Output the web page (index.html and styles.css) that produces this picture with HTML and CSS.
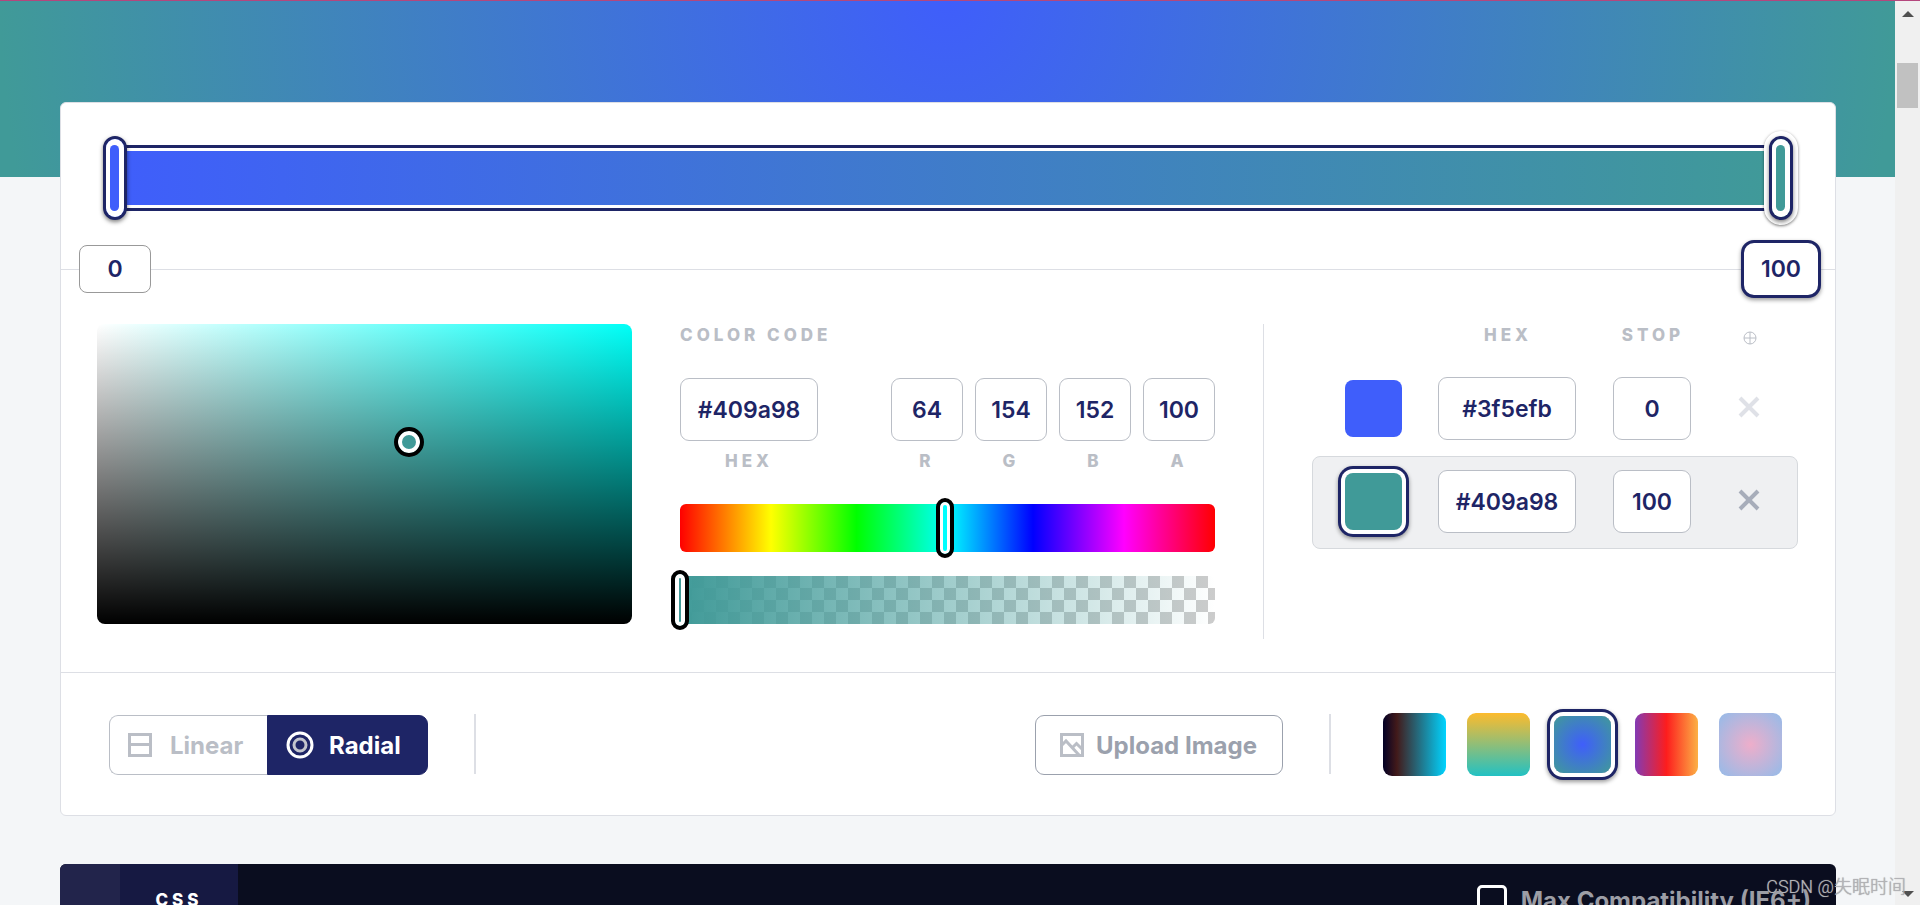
FILE: index.html
```html
<!DOCTYPE html>
<html lang="en">
<head>
<meta charset="utf-8">
<title>CSS Gradient</title>
<link rel="stylesheet" href="styles.css">
</head>
<body>
<div class="viewport">
  <main class="page">
    <section class="card">
      <div class="gradient-section">
        <div class="gradient-bar">
          <button class="handle handle-start" aria-label="Blue stop"></button>
          <button class="handle handle-end" aria-label="Teal stop"></button>
          <input class="position position-start" aria-label="First stop position" value="0">
          <input class="position position-end" aria-label="Last stop position" value="100">
        </div>
      </div>

      <div class="editor">
        <div class="picker"><button class="picker-dot" aria-label="Selected color"></button></div>

        <div class="codes">
          <h2 class="label heading">Color Code</h2>
          <div class="fields">
            <div class="field field-hex"><input id="hex" class="box" value="#409a98"><label class="label" for="hex">Hex</label></div>
            <div class="field"><input id="r" class="box" value="64"><label class="label" for="r">R</label></div>
            <div class="field"><input id="g" class="box" value="154"><label class="label" for="g">G</label></div>
            <div class="field"><input id="b" class="box" value="152"><label class="label" for="b">B</label></div>
            <div class="field"><input id="a" class="box" value="100"><label class="label" for="a">A</label></div>
          </div>
          <div class="track hue"><input type="range" aria-label="Hue" min="0" max="1000" value="495"></div>
          <div class="track alpha"><input type="range" aria-label="Opacity" min="0" max="100" value="0"></div>
        </div>

        <div class="stops">
          <div class="stop-row stop-head">
            <span></span>
            <span class="label" id="stop-hex">Hex</span>
            <span class="label" id="stop-pos">Stop</span>
            <svg class="plus" viewBox="0 0 14 14" aria-hidden="true"><circle cx="7" cy="7" r="6"/><path d="M7 1v12M1 7h12"/></svg>
          </div>
          <div class="stop-row">
            <button class="swatch blue" aria-label="Pick blue stop"></button>
            <input class="box" aria-labelledby="stop-hex" value="#3f5efb">
            <input class="box box-stop" aria-labelledby="stop-pos" value="0">
            <button class="remove faint" aria-label="Remove stop"><svg viewBox="0 0 24 24"><path d="M3 3l18 18M21 3L3 21"/></svg></button>
          </div>
          <div class="stop-row selected">
            <button class="swatch teal active" aria-label="Pick teal stop"></button>
            <input class="box" aria-labelledby="stop-hex" value="#409a98">
            <input class="box box-stop" aria-labelledby="stop-pos" value="100">
            <button class="remove" aria-label="Remove stop"><svg viewBox="0 0 24 24"><path d="M3 3l18 18M21 3L3 21"/></svg></button>
          </div>
        </div>
      </div>

      <div class="toolbar">
        <div class="modes">
          <button class="mode linear">
            <svg class="icon" width="24" height="24" viewBox="0 0 24 24"><path d="M1.5 1.5h21v21h-21zM1.5 11.500h21"/></svg>Linear
          </button>
          <button class="mode radial">
            <svg class="icon" width="28" height="28" viewBox="0 0 28 28"><circle cx="14" cy="14" r="12"/><circle class="ring" cx="14" cy="14" r="6"/></svg>Radial
          </button>
        </div>
        <span class="rule"></span>
        <button class="upload">
          <svg class="icon" width="24" height="24" viewBox="0 0 24 24"><path d="M1.5 1.5h21v21h-21z"/><path d="M2 12l4-4 13 14M12 15l4.500-4.500 6 6"/></svg>Upload Image
        </button>
        <span class="rule"></span>
        <div class="presets">
          <button class="preset night" aria-label="Night gradient"></button>
          <button class="preset sand" aria-label="Sand gradient"></button>
          <button class="preset ocean active" aria-label="Ocean gradient"></button>
          <button class="preset sunset" aria-label="Sunset gradient"></button>
          <button class="preset candy" aria-label="Candy gradient"></button>
        </div>
      </div>
    </section>

    <section class="code-panel">
      <span class="gutter"></span>
      <button class="tab">CSS</button>
      <label class="compat"><input type="checkbox">Max Compatibility (IE6+)</label>
    </section>
  </main>
  <div class="scrollbar" aria-hidden="true">
    <svg width="12" height="6" viewBox="0 0 12 6"><path d="M0 6l6-6 6 6z"/></svg>
    <span class="thumb"></span>
    <svg class="down" width="12" height="6" viewBox="0 0 12 6"><path d="M0 0h12L6 6z"/></svg>
  </div>
  <div class="watermark">CSDN @失眠时间</div>
</div>
</body>
</html>
```
FILE: styles.css
```css
* { box-sizing: border-box; }

:root {
  --navy: #1e2566;
  --blue: #3f5efb;
  --teal: #409a98;
  --line: #dddfe5;
  --muted: #babec6;
}

body {
  margin: 0;
  font-family: Inter, "Liberation Sans", sans-serif;
  color: var(--navy);
}

button, input { font: inherit; color: inherit; margin: 0; }
button { border: 0; padding: 0; background: none; cursor: pointer; }
svg { display: block; }

.viewport {
  position: relative;
  display: flex;
  height: 100vh;
  overflow: hidden;
  border-top: 1px solid #b4477d;
}

.page {
  flex: 1;
  padding: 101px 59px 0 60px;
  background: linear-gradient(#f4f6f8, #f4f6f8) 0 176px no-repeat, radial-gradient(circle farthest-side at 50% 0, var(--blue), var(--teal));
}

.card {
  background: #fff;
  border: 1px solid var(--line);
  border-radius: 6px;
}

/* Gradient slider */
.gradient-section {
  padding: 42px 54px 58px;
  border-bottom: 1px solid var(--line);
}

.gradient-bar {
  position: relative;
  height: 66px;
  border: solid var(--navy);
  border-width: 3px 0;
  padding: 3px 0;
  background: linear-gradient(90deg, var(--blue), var(--teal)) content-box;
}

.handle {
  position: absolute;
  top: -12px;
  width: 24px;
  height: 84px;
  border: 3px solid var(--navy);
  border-radius: 12px;
  transform: translateX(-50%);
}

.handle::before {
  content: "";
  position: absolute;
  inset: 0;
  border-radius: 9px;
  background: #fff;
}

.handle::after {
  content: "";
  position: absolute;
  inset: 6px 5px 6px 4px;
  border-radius: 5px;
  background: inherit;
}

.handle-start { left: 0; background: var(--blue); box-shadow: 0 2px 4px rgba(0, 0, 0, .5); }
.handle-end { left: 100%; background: var(--teal); box-shadow: 0 2px 4px rgba(0, 0, 0, .5), 0 0 0 5px #fff, 0 1px 3px 5px rgba(0, 0, 0, .5); }

.position {
  position: absolute;
  top: 97px;
  width: 72px;
  height: 48px;
  border: 1px solid #999;
  border-radius: 8px;
  background: #fff;
  font-size: 23px;
  font-weight: 600;
  text-align: center;
  transform: translateX(-50%);
}

.position-start { left: 0; }

.position-end {
  left: 100%;
  top: 92px;
  width: 80px;
  height: 58px;
  border: 3px solid var(--navy);
  border-radius: 13px;
  box-shadow: 0 2px 4px rgba(0, 0, 0, .4);
}

/* Editor */
.editor {
  display: grid;
  grid-template-columns: repeat(3, 1fr);
  gap: 48px;
  padding: 54px 37px 33px 36px;
  border-bottom: 1px solid var(--line);
}

.picker {
  position: relative;
  height: 300px;
  border-radius: 8px;
  background: linear-gradient(transparent, #000), linear-gradient(90deg, #fff, #00fff7);
}

.picker-dot {
  position: absolute;
  left: 58.3%;
  top: 39.3%;
  width: 30px;
  height: 30px;
  border: 4px solid #000;
  border-radius: 50%;
  background: var(--teal);
  box-shadow: inset 0 0 0 4px #fff;
  transform: translate(-50%, -50%);
}

.label {
  font-size: 17px;
  font-weight: 800;
  line-height: 22px;
  letter-spacing: 4px;
  text-transform: uppercase;
  color: var(--muted);
}

.heading { margin: 0; }

.fields {
  display: flex;
  gap: 12px;
  margin-top: 32px;
}

.field {
  display: flex;
  flex-direction: column;
  align-items: center;
  gap: 9px;
  width: 72px;
}

.field-hex { width: 138px; margin-right: auto; }

.box {
  width: 100%;
  height: 63px;
  padding: 0;
  border: 1px solid var(--muted);
  border-radius: 9px;
  background: #fff;
  font-size: 23px;
  font-weight: 600;
  text-align: center;
}

.track {
  height: 48px;
  border-radius: 6px;
}

.hue {
  margin-top: 32px;
  background: linear-gradient(90deg, #f00 0%, #ff0 17%, #0f0 33%, #0ff 50%, #00f 66%, #f0f 83%, #f00 100%);
}

.alpha {
  margin-top: 24px;
  background: linear-gradient(90deg, var(--teal), transparent), conic-gradient(#fff 25%, #ccc 0 50%, #fff 0 75%, #ccc 0) 12px 0 / 24px 24px;
}

.track input {
  appearance: none;
  display: block;
  width: calc(100% + 18px);
  height: 60px;
  margin: 0 -9px;
  background: none;
  position: relative;
  top: -6px;
}

.track input::-webkit-slider-thumb {
  appearance: none;
  width: 18px;
  height: 60px;
  border: 4px solid #000;
  border-radius: 9px;
  background: #0ff;
  box-shadow: inset 0 0 0 3px #fff;
}

.alpha input::-webkit-slider-thumb {
  background: var(--teal);
  box-shadow: inset 0 0 0 4px #fff;
}

/* Stop list */
.stops {
  border-left: 1px solid var(--line);
  padding-left: 48px;
  min-height: 315px;
}

.stop-row {
  display: grid;
  grid-template-columns: 1fr 138px 152px 42px;
  align-items: center;
  justify-items: center;
  height: 93px;
  padding: 0 27px 2px 0;
  border: 1px solid transparent;
  border-radius: 8px;
}

.stop-head { height: 22px; margin-bottom: 17px; padding-bottom: 0; border: 0; }
.stop-row.selected { border-color: #d6d9dd; background: #eff0f2; }
.box-stop { width: 78px; }

.plus { width: 14px; height: 14px; margin-top: 6px; fill: none; stroke: var(--muted); }

.swatch {
  width: 57px;
  height: 57px;
  margin-right: 4px;
  border-radius: 8px;
}

.blue { background: var(--blue); }
.teal { background: var(--teal); }

.active {
  box-shadow: 0 0 0 4px #fff, 0 0 0 7px var(--navy), 0 2px 4px 7px rgba(0, 0, 0, .4);
}

.remove { padding-bottom: 4px; }
.remove svg { width: 24px; height: 24px; fill: none; stroke: #a7adba; stroke-width: 4; }
.remove.faint svg { stroke: #dfe1e7; }

/* Toolbar */
.toolbar {
  display: flex;
  align-items: center;
  height: 142px;
  padding: 0 53px 0 48px;
  font-size: 24px;
  font-weight: 700;
}

.toolbar .rule {
  width: 2px;
  height: 60px;
  background: var(--line);
}

.icon { flex: none; fill: none; stroke: var(--muted); stroke-width: 3; }
.modes { display: flex; margin-right: 46px; }

.mode, .upload {
  display: flex;
  align-items: center;
  height: 60px;
  margin-top: 2px;
  border: 1px solid var(--muted);
}

.mode { gap: 18px; padding-left: 18px; }
.linear { width: 158px; border-right: 0; border-radius: 9px 0 0 9px; color: var(--muted); }
.radial { width: 161px; border-color: var(--navy); border-radius: 0 9px 9px 0; background: var(--navy); color: #fff; gap: 15px; }
.radial .icon { stroke: #fff; }
.radial .icon .ring { stroke: #c3c5cd; }

.upload {
  gap: 12px;
  width: 248px;
  margin: 2px 46px 0 auto;
  padding: 0 0 0 24px;
  border-color: #9ba1ad;
  border-radius: 9px;
  color: #9ba1ad;
}

.presets { display: flex; gap: 21px; margin-left: 52px; }
.preset { width: 63px; height: 63px; border-radius: 9px; }
.night { background: linear-gradient(90deg, #020024, #421a1a 22%, #00d4ff); }
.sand { background: linear-gradient(#fdbb2d, #22c1c3); }
.ocean { background: radial-gradient(circle, var(--blue), var(--teal)); }
.preset.active {
  width: 57px;
  height: 57px;
  margin: 3px;
}
.sunset { background: linear-gradient(90deg, #833ab4, #fd1d1d 50%, #fcb045); }
.candy { background: radial-gradient(circle, #eeaeca, #94bbe9); }

/* Code panel */
.code-panel {
  display: flex;
  height: 120px;
  margin-top: 48px;
  border-radius: 6px 6px 0 0;
  overflow: hidden;
  background: #0a0d1f;
}

.gutter { width: 60px; background: #22244b; }

.tab {
  width: 118px;
  height: 72px;
  background: #161942;
  color: #fff;
  font-size: 17px;
  font-weight: 800;
  letter-spacing: 4px;
}

.compat {
  display: flex;
  align-items: center;
  gap: 14px;
  height: 72px;
  margin-left: auto;
  padding-right: 25px;
  font-size: 24px;
  font-weight: 700;
  color: #9c9da5;
}

.compat input {
  appearance: none;
  width: 30px;
  height: 30px;
  border: 3px solid #fff;
  border-radius: 5px;
}

/* Window chrome */
.scrollbar {
  display: flex;
  flex-direction: column;
  align-items: center;
  width: 25px;
  padding: 10px 0 8px;
  background: #f0f0f0;
  fill: #505050;
}

.thumb { width: 21px; height: 45px; margin-top: 46px; background: #c1c1c1; }
.down { margin-top: auto; }

.watermark {
  position: absolute;
  right: 14px;
  bottom: 4px;
  font: 300 18px/28px Roboto, "Noto Sans CJK SC", sans-serif;
  color: #b4b4b8;
  text-shadow: 0 0 1px #888;
}
```
